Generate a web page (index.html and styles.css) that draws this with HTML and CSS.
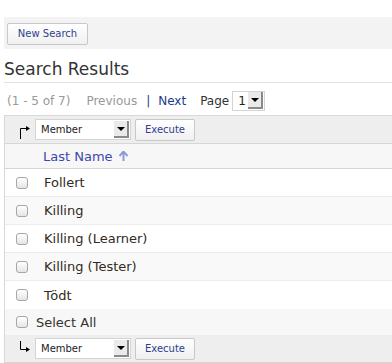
FILE: index.html
```html
<!DOCTYPE html>
<html lang="en">
<head>
    <meta charset="UTF-8">
    <title>Search Results</title>
    <link rel="stylesheet" href="styles.css">
</head>
<body>
    <div class="page">
        <div class="toolbar">
            <button class="btn">New Search</button>
        </div>

        <h2 class="title">Search Results</h2>

        <div class="pager">
            <span class="count">(1 - 5 of 7)</span>
            <span class="prev">Previous</span>
            <span class="sep">|</span>
            <a class="next" href="#">Next</a>
            <span class="page-label">Page</span>
            <span class="dropdown small"><span class="value">1</span><span class="drop-btn"></span></span>
        </div>

        <div class="results">
            <div class="row action-row">
                <svg class="bulk-arrow" width="12" height="14" viewBox="0 0 12 14">
                    <path d="M1.5 14 V3.5 H7" fill="none" stroke="#000" stroke-width="1"/>
                    <path d="M7 1 L11 3.5 L7 6 Z" fill="#000"/>
                </svg>
                <span class="dropdown"><span class="value">Member</span><span class="drop-btn"></span></span>
                <button class="btn">Execute</button>
            </div>

            <div class="row header-row">
                <a class="sort" href="#">Last Name</a>
                <svg class="sort-arrow" width="9" height="10" viewBox="0 0 9 10">
                    <path d="M4.5 10 V2" stroke="#8b9ad6" stroke-width="2"/>
                    <path d="M0.5 5 L4.5 0.5 L8.5 5" fill="none" stroke="#8b9ad6" stroke-width="2"/>
                </svg>
            </div>

            <div class="row item"><input type="checkbox" class="check"><span class="name">Follert</span></div>
            <div class="row item alt"><input type="checkbox" class="check"><span class="name">Killing</span></div>
            <div class="row item"><input type="checkbox" class="check"><span class="name">Killing (Learner)</span></div>
            <div class="row item alt"><input type="checkbox" class="check"><span class="name">Killing (Tester)</span></div>
            <div class="row item last"><input type="checkbox" class="check"><span class="name">Tödt</span></div>

            <div class="row select-all"><input type="checkbox" class="check"><span>Select All</span></div>

            <div class="row action-row bottom">
                <svg class="bulk-arrow" width="12" height="12" viewBox="0 0 12 12">
                    <path d="M1.5 0 V8.5 H7" fill="none" stroke="#000" stroke-width="1"/>
                    <path d="M7 6 L11 8.5 L7 11 Z" fill="#000"/>
                </svg>
                <span class="dropdown"><span class="value">Member</span><span class="drop-btn"></span></span>
                <button class="btn">Execute</button>
            </div>
        </div>
    </div>
</body>
</html>
```

FILE: styles.css
```css
* {
    box-sizing: border-box;
    margin: 0;
    padding: 0;
}

body {
    font-family: "DejaVu Sans", Verdana, sans-serif;
    color: #333;
    background: #fff;
    overflow: hidden;
}

.page {
    padding-left: 4px;
    padding-top: 17px;
}

/* Top toolbar */
.toolbar {
    background: #f3f3f3;
    height: 32px;
    padding: 5px 3px;
}

.btn {
    font-family: "DejaVu Sans", Verdana, sans-serif;
    font-size: 10px;
    color: #2f3f8e;
    background: linear-gradient(#fff, #f0f0f0);
    border: 1px solid #c8c8c8;
    border-radius: 2px;
    height: 22px;
    padding: 0 9px;
    cursor: pointer;
}

.toolbar .btn {
    width: 81px;
}

/* Heading */
.title {
    font-size: 17px;
    font-weight: normal;
    line-height: 20px;
    color: #333;
    margin-top: 10px;
    padding-bottom: 3px;
    border-bottom: 1px solid #e3e3e3;
}

/* Pagination */
.pager {
    display: flex;
    align-items: center;
    height: 32px;
    padding-left: 3px;
    padding-top: 3px;
    font-size: 12px;
    color: #999;
}

.prev {
    margin-left: 16px;
}

.sep {
    color: #1c3a8c;
    margin-left: 9px;
}

.next {
    color: #1c3a8c;
    text-decoration: none;
    margin-left: 8px;
}

.page-label {
    color: #333;
    margin-left: 14px;
}

/* Fake select */
.dropdown {
    display: inline-flex;
    align-items: center;
    justify-content: space-between;
    width: 96px;
    height: 21px;
    background: #fff;
    border: 1px solid #d4d4d4;
    font-size: 10px;
    color: #222;
    padding: 1px 1px 1px 5px;
}

.dropdown.small {
    width: 33px;
    height: 20px;
    margin-left: 3px;
    font-size: 12px;
    padding-left: 5px;
}

.drop-btn {
    position: relative;
    width: 15px;
    height: 17px;
    background: #eaeaea;
    border-right: 2px solid #8a8a8a;
    border-bottom: 2px solid #8a8a8a;
}

.drop-btn::after {
    content: "";
    position: absolute;
    left: 3px;
    top: 6px;
    border-left: 4px solid transparent;
    border-right: 4px solid transparent;
    border-top: 4px solid #000;
}

/* Results table */
.results {
    border-top: 1px solid #d8d8d8;
    border-left: 1px solid #d8d8d8;
}

.row {
    display: flex;
    align-items: center;
    height: 28px;
    border-bottom: 1px solid #ececec;
    font-size: 13px;
}

.action-row {
    background: #eeeeee;
    border-bottom: 1px solid #d6d6d6;
    gap: 4px;
    padding-left: 14px;
}

.action-row .bulk-arrow {
    margin-top: 4px;
}

.action-row.bottom .bulk-arrow {
    margin-top: -4px;
}

.header-row {
    background: #f7f7f7;
    height: 25px;
    border-bottom: 1px solid #d6d6d6;
    padding-left: 38px;
}

.sort {
    color: #3d48ae;
    text-decoration: none;
}

.sort-arrow {
    margin-left: 6px;
    margin-top: -1px;
}

.item {
    background: #fff;
    padding-left: 11px;
}

.item.alt {
    background: #f9f9f9;
}

.item.last {
    border-bottom: none;
}

.check {
    appearance: none;
    -webkit-appearance: none;
    width: 12px;
    height: 12px;
    border: 1px solid #a6a6a6;
    border-radius: 3px;
    background: linear-gradient(#fff, #e6e6e6);
}

.name {
    margin-left: 16px;
    color: #332a22;
}

.select-all {
    background: #f7f7f7;
    height: 26px;
    border-bottom: none;
    padding-left: 11px;
    gap: 8px;
}

.bottom {
    border-bottom: 1px solid #d6d6d6;
}
```
